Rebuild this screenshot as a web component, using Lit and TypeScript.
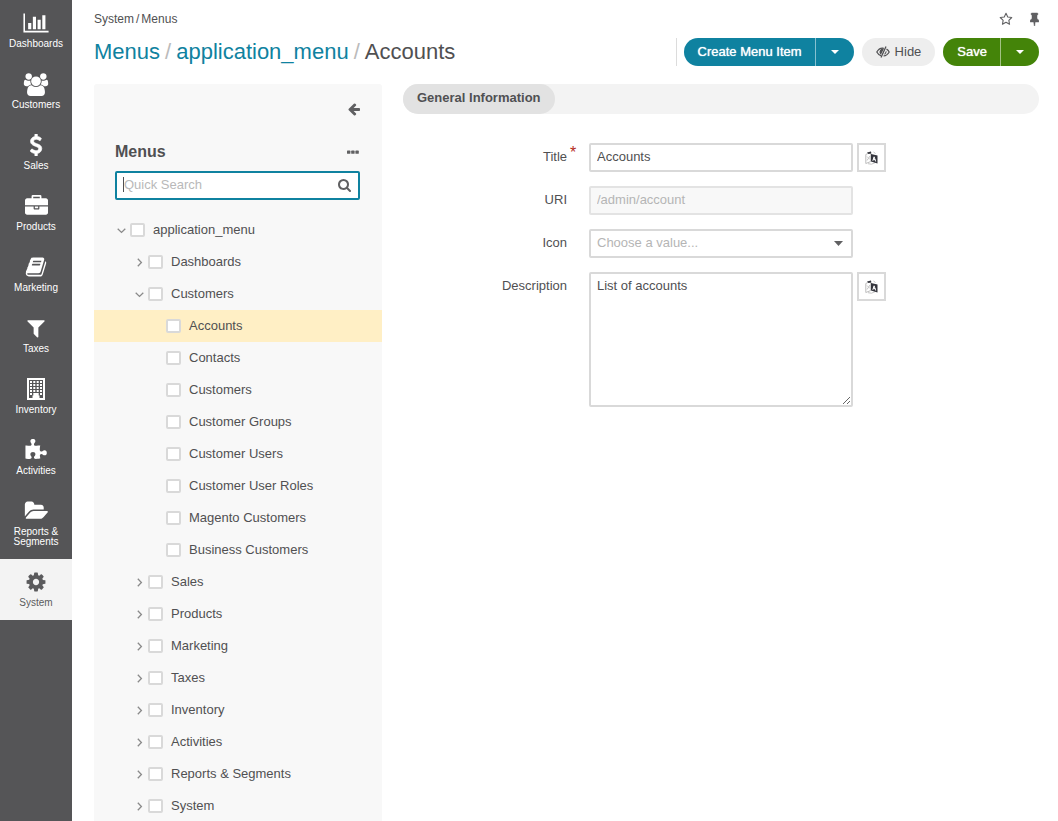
import { LitElement, html, svg, css, nothing } from "lit";
import { customElement, state } from "lit/decorators.js";
import { classMap } from "lit/directives/class-map.js";

interface Glyph {
  box: string;
  w: number;
  h: number;
  body: unknown;
}

const glyphs: Record<string, Glyph> = {
  chart: { box: "0 0 2048 1792", w: 26, h: 22, body: svg`<path d="M640 896v512h-256v-512h256zm384-512v1024h-256v-1024h256zm1024 1152v128h-2048v-1536h128v1408h1920zm-640-896v768h-256v-768h256zm384-384v1152h-256v-1152h256z"/>` },
  users: { box: "0 0 2048 1792", w: 26, h: 23, body: svg`<path d="M657 896q-162 5-265 128h-134q-82 0-138-40.5t-56-118.5q0-353 124-353 6 0 43.5 21t97.5 42.5 119 21.5q67 0 133-23-5 37-5 66 0 139 81 256zm1071 637q0 120-73 189.5t-194 69.5h-874q-121 0-194-69.5t-73-189.5q0-53 3.5-103.5t14-109 26.5-108.5 43-97.5 62-81 85.5-53.5 111.5-20q10 0 43 21.5t73 48 107 48 135 21.5 135-21.5 107-48 73-48 43-21.5q61 0 111.5 20t85.5 53.5 62 81 43 97.5 26.5 108.5 14 109 3.5 103.5zm-1024-1277q0 106-75 181t-181 75-181-75-75-181 75-181 181-75 181 75 75 181zm704 384q0 159-112.5 271.5t-271.5 112.5-271.5-112.5-112.5-271.5 112.5-271.5 271.5-112.5 271.5 112.5 112.5 271.5zm576 225q0 78-56 118.5t-138 40.5h-134q-103-123-265-128 81-117 81-256 0-29-5-66 66 23 133 23 59 0 119-21.5t97.5-42.5 43.5-21q124 0 124 353zm-128-609q0 106-75 181t-181 75-181-75-75-181 75-181 181-75 181 75 75 181z"/>` },
  dollar: { box: "0 0 1792 1792", w: 22, h: 22, body: svg`<path stroke="currentColor" stroke-width="60" d="M1362 1185q0 153-99.5 263.5t-258.5 136.5v175q0 14-9 23t-23 9h-135q-13 0-22.5-9.5t-9.5-22.5v-175q-66-9-127.5-31t-101.5-44.5-74-48-46.5-37.5-17.5-18q-17-21-2-41l103-135q7-10 23-12 15-2 24 9l2 2q113 99 243 125 37 8 74 8 81 0 142.5-43t61.5-122q0-28-15-53t-33.5-42-58.5-37.5-66-32-80-32.5q-39-16-61.5-25t-61.5-26.5-62.5-31-56.5-35.5-53.5-42.5-43.5-49-35.5-58-21-66.5-8.5-78q0-138 98-242t255-134v-180q0-13 9.5-22.5t22.5-9.5h135q14 0 23 9t9 23v176q57 6 110.5 23t87 33.5 63.5 37.5 39 29 15 14q17 18 5 38l-81 146q-8 15-23 16-14 3-27-7-3-3-14.5-12t-39-26.5-58.5-32-74.5-26-85.5-11.5q-95 0-155 43t-60 111q0 26 8.5 48t29.5 41.5 39.5 33 56 31 60.5 27 70 27.5q53 20 81 31.5t76 35 75.5 42.5 62 50 53 63.5 31.5 76.5 13 94z"/>` },
  briefcase: { box: "0 0 1792 1792", w: 23, h: 23, body: svg`<path d="M640 256h512v-128h-512v128zm1152 640v480q0 66-47 113t-113 47h-1472q-66 0-113-47t-47-113v-480h672v160q0 26 19 45t45 19h320q26 0 45-19t19-45v-160h672zm-768 0v128h-256v-128h256zm768-480v384h-1792v-384q0-66 47-113t113-47h352v-160q0-40 28-68t68-28h576q40 0 68 28t28 68v160h352q66 0 113 47t47 113z"/>` },
  book: { box: "0 0 1792 1792", w: 22, h: 22, body: svg`<path d="M1703 478q40 57 18 129l-275 906q-19 64-76.5 107.5t-122.5 43.5h-923q-77 0-148.5-53.5t-99.5-131.5q-24-67-2-127 0-4 3-27t4-37q1-8-3-21.5t-3-19.5q2-11 8-21t16.5-23.5 16.5-23.5q23-38 45-91.5t30-91.5q3-10 .5-30t-.5-28q3-11 17-28t17-23q21-36 42-92t25-90q1-9-2.5-32t.5-28q4-13 22-30.5t22-22.5q19-26 42.5-84.5t27.5-96.5q1-8-3-25.5t-2-26.5q2-8 9-18t18-23 17-21q8-12 16.5-30.5t15-35 16-36 19.5-32 26.5-23.5 36-11.5 47.5 5.5l-1 3q38-9 51-9h761q74 0 114 56t18 130l-274 906q-36 119-71.5 153.5t-128.5 34.5h-869q-27 0-38 15-11 16-1 43 24 70 144 70h923q29 0 56-15.5t35-41.5l300-987q7-22 5-57 38 15 59 43zm-1064 2q-4 13 2 22.5t20 9.5h608q13 0 25.5-9.5t16.5-22.5l21-64q4-13-2-22.5t-20-9.5h-608q-13 0-25.5 9.5t-16.5 22.5zm-83 256q-4 13 2 22.5t20 9.5h608q13 0 25.5-9.5t16.5-22.5l21-64q4-13-2-22.5t-20-9.5h-608q-13 0-25.5 9.5t-16.5 22.5z"/>` },
  funnel: { box: "0 0 1792 1792", w: 22, h: 22, body: svg`<path d="M1595 295q17 41-14 70l-493 493v742q0 42-39 59-13 5-25 5-27 0-45-19l-256-256q-19-19-19-45v-486l-493-493q-31-29-14-70 17-39 59-39h1280q42 0 59 39z"/>` },
  building: { box: "0 0 22 22", w: 22, h: 22, body: svg`<path fill-rule="evenodd" d="M2 0h18v22h-18zM4 2v18h3.500v-2.500h1.500v2.500h4v-2.500h1.500v2.500h3.500v-18z"/><path d="M5 3h2v2h-2zM8.300 3h2v2h-2zM11.700 3h2v2h-2zM15 3h2v2h-2zM5 6h2v2h-2zM8.300 6h2v2h-2zM11.700 6h2v2h-2zM15 6h2v2h-2zM5 9h2v2h-2zM8.300 9h2v2h-2zM11.700 9h2v2h-2zM15 9h2v2h-2zM5 12h2v2h-2zM8.300 12h2v2h-2zM11.700 12h2v2h-2zM15 12h2v2h-2zM5 15h2v2h-2zM8.300 15h5.400v6h-5.400zM15 15h2v2h-2z"/>` },
  puzzle: { box: "0 0 1792 1792", w: 23, h: 23, body: svg`<path d="M1699 1085q0 81-44.5 135t-123.500 54q-41 0-77.500-17.500t-59-38-56.500-38-71-17.500q-110 0-110 124 0 39 16 115t15 115v5q-22 0-33 1-34 3-97.500 11.500t-115.500 13.500-98 5q-61 0-103-26.500t-42-83.500q0-37 17.500-71t38-56.500 38-59 17.500-77.500q0-79-54-123.500t-135-44.500q-84 0-143 45.500t-59 127.500q0 43 15 83t33.500 64.500 33.500 53 15 50.500q0 45-46 89-37 35-117 35-95 0-245-24-9-2-27.500-4t-27.500-4l-13-2q-1 0-3-1-2 0-2-1v-1024q2 1 17.500 3.500t34 5 21.500 3.500q150 24 245 24 80 0 117-35 46-44 46-89 0-22-15-50.500t-33.500-53-33.500-64.500-15-83q0-82 59-127.500t144-45.500q80 0 134 44.500t54 123.500q0 41-17.500 77.500t-38 59-38 56.500-17.500 71q0 57 42 83.500t103 26.500q64 0 180-15t163-17v2q-1 2-3.500 17.500t-5 34-3.500 21.500q-24 150-24 245 0 80 35 117 44 46 89 46 22 0 50.500-15t53-33.500 64.500-33.500 83-15q82 0 127.500 59t45.500 143z"/>` },
  folder: { box: "0 0 1943 1792", w: 24, h: 22, body: svg`<path d="M1943 952q0 31-31 66l-336 396q-43 51-120.500 86.500t-143.500 35.500h-1088q-34 0-60.500-13t-26.500-43q0-31 31-66l336-396q43-51 120.500-86.500t143.500-35.500h1088q34 0 60.500 13t26.500 43zm-343-344v160h-832q-94 0-197 47.500t-164 119.500l-337 396-5 6q0-4-.5-12.500t-.5-12.500v-960q0-92 66-158t158-66h320q92 0 158 66t66 158v32h544q92 0 158 66t66 158z"/>` },
  cog: { box: "0 0 1792 1792", w: 22, h: 22, body: svg`<path d="M1152 896q0-106-75-181t-181-75-181 75-75 181 75 181 181 75 181-75 75-181zm512-109v222q0 12-8 23t-20 13l-185 28q-19 54-39 91 35 50 107 138 10 12 10 25t-9 23q-27 37-99 108t-94 71q-12 0-26-9l-138-108q-44 23-91 38-16 136-29 186-7 28-36 28h-222q-14 0-24.500-8.500t-11.500-21.500l-28-184q-49-16-90-37l-141 107q-10 9-25 9-14 0-25-11-126-114-165-168-7-10-7-23 0-12 8-23 15-21 51-66.500t54-70.500q-27-50-41-99l-183-27q-13-2-21-12.500t-8-23.500v-222q0-12 8-23t19-13l186-28q14-46 39-92-40-57-107-138-10-12-10-24 0-10 9-23 26-36 98.500-107.500t94.500-71.500q13 0 26 10l138 107q44-23 91-38 16-136 29-186 7-28 36-28h222q14 0 24.500 8.500t11.500 21.500l28 184q49 16 90 37l142-107q9-9 24-9 13 0 25 10 129 119 165 170 7 8 7 22 0 12-8 23-15 21-51 66.500t-54 70.500q26 50 41 98l183 28q13 2 21 12.500t8 23.500z"/>` },
  star: { box: "0 0 14 14", w: 14, h: 14, body: svg`<path fill="none" stroke="currentColor" stroke-width="1.100" stroke-linejoin="round" d="M7 1.300l1.750 3.650 4 .55-2.900 2.800.7 3.950L7 10.350l-3.550 1.900.7-3.950L1.250 5.500l4-.55z"/>` },
  pin: { box: "320 0 1152 1792", w: 9, h: 14, body: svg`<path stroke="currentColor" stroke-width="60" d="M1472 1216q0 26-19 45t-45 19h-429l-51 483q-2 12-10.500 20.500t-20.500 8.500h-1q-27 0-32-27l-76-485h-404q-26 0-45-19t-19-45q0-123 78.500-221.500t177.500-98.500v-512q-52 0-90-38t-38-90 38-90 90-38h640q52 0 90 38t38 90-38 90-90 38v512q99 0 177.500 98.500t78.500 221.500z"/>` },
  back: { box: "0 0 1536 1792", w: 12, h: 14, body: svg`<path d="M1536 896v128q0 53-32.500 90.500t-84.500 37.500h-704l293 294q38 36 38 90t-38 90l-75 76q-37 37-90 37-52 0-91-37l-651-652q-37-37-37-90 0-52 37-91l651-650q38-38 91-38 52 0 90 38l75 74q38 38 38 91t-38 91l-293 293h704q52 0 84.500 37.500t32.500 90.500z"/>` },
  dots: { box: "0 0 12 4", w: 12, h: 4, body: svg`<rect x="0" y=".6" width="3.400" height="3.200" rx=".6"/><rect x="4.200" y=".6" width="3.400" height="3.200" rx=".6"/><rect x="8.400" y=".6" width="3.400" height="3.200" rx=".6"/>` },
  search: { box: "64 128 1664 1664", w: 13, h: 13, body: svg`<path d="M1216 832q0-185-131.500-316.500t-316.500-131.500-316.500 131.500-131.500 316.500 131.500 316.500 316.500 131.500 316.500-131.500 131.500-316.500zm512 832q0 52-38 90t-90 38q-54 0-90-38l-343-342q-179 124-399 124-143 0-273.500-55.500t-225-150-150-225-55.500-273.500 55.500-273.500 150-225 225-150 273.500-55.500 273.500 55.500 225 150 150 225 55.500 273.500q0 220-124 399l343 343q37 37 37 90z"/>` },
  eye: { box: "0 0 14 12", w: 14, h: 12, body: svg`<path fill="none" stroke="currentColor" stroke-width="1.200" d="M7.500 2.200C4.500 1.600 2.200 3.500.8 6c1 1.900 2.400 3.100 4.200 3.700M7.500 10c2.400-.2 4.500-1.900 5.700-4-.7-1.300-1.600-2.300-2.700-3"/><path d="M8.200 2.300a3.700 3.700 0 0 0-3.300 6.400z"/><path fill="none" stroke="currentColor" stroke-width="1.300" d="M10 .6L5 11.400"/><path d="M10.300 4.600a3.500 3.500 0 0 1-2.300 4.200z"/>` },
  caret: { box: "0 0 8 4", w: 8, h: 4, body: svg`<path d="M0 0h8l-4 4z"/>` },
  selectCaret: { box: "0 0 9 5", w: 9, h: 5, body: svg`<path d="M0 0h9l-4.500 5z"/>` },
  chevron: { box: "0 0 9 9", w: 9, h: 9, body: svg`<path fill="none" stroke="currentColor" stroke-width="1.300" d="M2.800.7l3.600 3.800-3.600 3.800"/>` },
  translate: { box: "0 0 13 14", w: 13, h: 14, body: svg`<path fill="#fff" stroke="#bdbdbd" d="M.8 3.500l5-2.500v9.500l-5 2z"/><path fill="none" stroke="#c4c4c4" d="M2 5.500l3 3M5 5l-3 4.500M3 12.700q3.500 1.500 7-1M8.500 1l2 1.500"/><path fill="#33343c" d="M6 3l6.500 1.500v8L6 10.500zM2 1.500l4-.9.200 1.800-2.700.7z"/><path fill="none" stroke="#fff" stroke-width="1" d="M7.800 9.800l1.300-4 1.600 4.700M8.300 8.600h2"/>` },
};

const glyph = (name: string) => {
  const g = glyphs[name];
  return html`<svg viewBox=${g.box} width=${g.w} height=${g.h} fill="currentColor" aria-hidden="true">${g.body}</svg>`;
};

const base = css`
  *, *::before, *::after { box-sizing: border-box; }
  svg { display: block; flex: none; }
  a { color: inherit; text-decoration: none; }
  button { margin: 0; padding: 0; border: 0; background: none; color: inherit; font: inherit; cursor: pointer; }
  ul { margin: 0; padding: 0; list-style: none; }
`;

@customElement("main-menu")
export class MainMenu extends LitElement {
  static styles = [base, css`
    :host { display: block; background: #555557; color: #fff; }
    .item {
      display: flex; flex-direction: column; align-items: center;
      padding: 12px 4px; font-size: 10px; line-height: 10px; text-align: center;
    }
    .icon { display: flex; align-items: center; height: 22px; margin-bottom: 5px; }
    .active { background: #f3f3f3; color: #5b5b5d; }
  `];

  private items = [
    ["chart", "Dashboards"], ["users", "Customers"], ["dollar", "Sales"], ["briefcase", "Products"],
    ["book", "Marketing"], ["funnel", "Taxes"], ["building", "Inventory"], ["puzzle", "Activities"],
    ["folder", "Reports & Segments"], ["cog", "System"],
  ];

  render() {
    return html`<nav aria-label="Main menu">
      ${this.items.map(([icon, label]) => html`
        <a class=${classMap({ item: true, active: label === "System" })} href="#">
          <span class="icon">${glyph(icon)}</span>${label}
        </a>`)}
    </nav>`;
  }
}

interface Node {
  label: string;
  open?: boolean;
  children?: Node[];
}

const leaf = (label: string): Node => ({ label });
const folder = (label: string): Node => ({ label, children: [] });

@customElement("menu-tree")
export class MenuTree extends LitElement {
  static styles = [base, css`
    :host { display: block; background: #f8f8f8; border-radius: 3px 3px 0 0; }
    .top { display: flex; justify-content: flex-end; padding: 18px 22px 0; color: #606062; }
    .head { display: flex; align-items: center; justify-content: space-between; padding: 26px 23px 0 21px; color: #606062; }
    h2 { margin: 0; font-size: 16px; line-height: 20px; color: #505052; }
    .search {
      display: flex; align-items: center; height: 29px; margin: 9px 22px 14px 21px; padding: 0 7px;
      border: 2px solid #0f82a0; border-radius: 2px; background: #fff; color: #606062;
    }
    .search input {
      flex: 1; min-width: 0; height: 15px; margin-bottom: 2px; padding: 0; border: 0; outline: 0; background: none;
      font: inherit; color: #505052; caret-color: transparent;
    }
    .search input:focus { box-shadow: -1px 0 #505052; }
    input::placeholder { color: #b9b9b9; opacity: 1; }
    .row { display: flex; align-items: center; height: 32px; padding-left: calc(23px + var(--depth) * 18px); }
    .selected { background: #ffefc5; }
    .toggle { width: 9px; height: 9px; margin-right: 4px; color: #8a8a8a; }
    .open svg { transform: rotate(90deg); }
    label { display: flex; align-items: center; gap: 8px; line-height: 16px; }
    .box {
      appearance: none; width: 15px; height: 14px; margin: 0; border: 2px solid #d9d9d9;
      border-radius: 2px; background: #fff;
    }
    .box:checked { background: #0f82a0; }
  `];

  @state() private tree: Node = {
    label: "application_menu",
    open: true,
    children: [
      folder("Dashboards"),
      {
        label: "Customers",
        open: true,
        children: ["Accounts", "Contacts", "Customers", "Customer Groups", "Customer Users",
          "Customer User Roles", "Magento Customers", "Business Customers"].map(leaf),
      },
      ...["Sales", "Products", "Marketing", "Taxes", "Inventory", "Activities", "Reports & Segments", "System"].map(folder),
    ],
  };

  firstUpdated() {
    this.renderRoot.querySelector<HTMLInputElement>(".search input")?.focus();
  }

  private toggle(node: Node) {
    node.open = !node.open;
    this.requestUpdate();
  }

  private branch(node: Node, depth: number): unknown {
    return html`<li>
      <div class=${classMap({ row: true, selected: node.label === "Accounts" })} style="--depth:${depth}">
        ${node.children
          ? html`<button class=${classMap({ toggle: true, open: !!node.open })} aria-label="Toggle ${node.label}"
              @click=${() => this.toggle(node)}>${glyph("chevron")}</button>`
          : html`<span class="toggle"></span>`}
        <label><input class="box" type="checkbox" />${node.label}</label>
      </div>
      ${node.open && node.children ? html`<ul>${node.children.map((n) => this.branch(n, depth + 1))}</ul>` : nothing}
    </li>`;
  }

  render() {
    return html`
      <div class="top"><button aria-label="Collapse panel">${glyph("back")}</button></div>
      <div class="head"><h2>Menus</h2><button aria-label="More actions">${glyph("dots")}</button></div>
      <div class="search">
        <input type="text" placeholder="Quick Search" aria-label="Quick Search" />
        <button aria-label="Search">${glyph("search")}</button>
      </div>
      <ul>${this.branch(this.tree, 0)}</ul>`;
  }
}

@customElement("item-form")
export class ItemForm extends LitElement {
  static styles = [base, css`
    :host { display: block; }
    .tabs { height: 30px; border-radius: 15px; background: #f3f3f3; }
    .tab {
      height: 30px; padding: 0 14px 2px; border-radius: 15px; background: #e2e2e2;
      font-weight: bold; line-height: 28px; color: #505052;
    }
    form { display: grid; grid-template-columns: 182px minmax(100px, 264px) 29px; gap: 14px 4px; padding-top: 29px; }
    form > label { grid-column: 1; padding: 6px 18px 0 0; line-height: 16px; text-align: right; }
    .field {
      width: 100%; height: 29px; margin: 0; padding: 0 6px 2px; border: 2px solid #d9d9d9; border-radius: 2px;
      background: #fff; font: inherit; color: #505052; outline: 0;
    }
    .disabled { background: #f8f8f8; border-color: #e3e3e3; color: #b5b5b5; }
    .area { display: block; height: 135px; padding: 4px 6px; line-height: 16px; resize: both; }
    .pick { display: grid; align-items: center; color: #606062; }
    .pick > * { grid-area: 1 / 1; }
    .pick svg { justify-self: end; margin-right: 10px; pointer-events: none; }
    .pick .field { appearance: none; color: #b5b5b5; }
    .translate { display: flex; align-items: center; justify-content: center; width: 29px; height: 29px; border: 2px solid #d9d9d9; }
    .required { position: relative; }
    .star { position: absolute; left: 100%; top: -4px; padding-left: 3px; color: #b52d20; font-size: 16px; line-height: 16px; }
  `];

  render() {
    return html`
      <div class="tabs"><button class="tab">General Information</button></div>
      <form>
        <label for="title"><span class="required">Title<span class="star">*</span></span></label>
        <input class="field" id="title" type="text" value="Accounts" />
        <button class="translate" type="button" aria-label="Translate title">${glyph("translate")}</button>
        <label for="uri">URI</label>
        <input class="field disabled" id="uri" type="text" value="/admin/account" disabled />
        <label for="icon">Icon</label>
        <div class="pick">
          <select class="field" id="icon"><option>Choose a value...</option></select>
          ${glyph("selectCaret")}
        </div>
        <label for="description">Description</label>
        <textarea class="field area" id="description">List of accounts</textarea>
        <button class="translate" type="button" aria-label="Translate description">${glyph("translate")}</button>
      </form>`;
  }
}

@customElement("app-root")
export class AppRoot extends LitElement {
  static styles = [base, css`
    :host {
      display: grid; grid-template-columns: 72px minmax(0, 1fr); height: 100vh; overflow: hidden;
      background: #fff; color: #505052; font: 13px/16px "Liberation Sans", Arial, sans-serif;
    }
    main { display: flex; flex-direction: column; min-height: 0; padding: 0 19px 0 22px; }
    .crumbs { display: flex; align-items: center; height: 37px; font-size: 12px; }
    .crumbs .sep { padding: 0 2px; }
    .shortcuts { display: flex; align-items: center; gap: 17px; margin-left: auto; color: #606062; }
    .title { display: flex; align-items: center; height: 30px; }
    h1 { display: flex; gap: 5px; margin: 0; font-size: 22px; line-height: 30px; font-weight: normal; white-space: nowrap; }
    h1 a { color: #0f82a0; }
    h1 .sep { color: #bbb; }
    .actions { display: flex; align-items: center; gap: 8px; margin-left: auto; padding-left: 7px; border-left: 1px solid #dcdcdc; }
    .split { display: flex; height: 28px; border-radius: 14px; overflow: hidden; color: #fff; }
    .split .action { padding: 0 13px 1px 14px; text-shadow: 0 0 1px #fff; }
    .split .more { display: flex; align-items: center; justify-content: center; width: 39px; border-left: 1px solid #ffffff80; }
    .create { background: #0f82a0; }
    .save { background: #448409; }
    .hide { display: flex; align-items: center; gap: 5px; height: 28px; padding: 0 14px 1px; border-radius: 14px; background: #eee; }
    .columns { display: grid; grid-template-columns: 288px minmax(0, 1fr); gap: 21px; flex: 1; min-height: 0; margin-top: 17px; }
  `];

  render() {
    return html`
      <main-menu></main-menu>
      <main>
        <div class="crumbs">
          <a href="#">System</a><span class="sep">/</span><a href="#">Menus</a>
          <div class="shortcuts">
            <button aria-label="Add to favorites">${glyph("star")}</button>
            <button aria-label="Pin page">${glyph("pin")}</button>
          </div>
        </div>
        <div class="title">
          <h1><a href="#">Menus</a><span class="sep">/</span><a href="#">application_menu</a><span class="sep">/</span><span>Accounts</span></h1>
          <div class="actions">
            <div class="split create">
              <button class="action">Create Menu Item</button>
              <button class="more" aria-label="More create actions">${glyph("caret")}</button>
            </div>
            <button class="hide">${glyph("eye")}Hide</button>
            <div class="split save">
              <button class="action">Save</button>
              <button class="more" aria-label="More save actions">${glyph("caret")}</button>
            </div>
          </div>
        </div>
        <div class="columns">
          <menu-tree></menu-tree>
          <item-form></item-form>
        </div>
      </main>`;
  }
}
